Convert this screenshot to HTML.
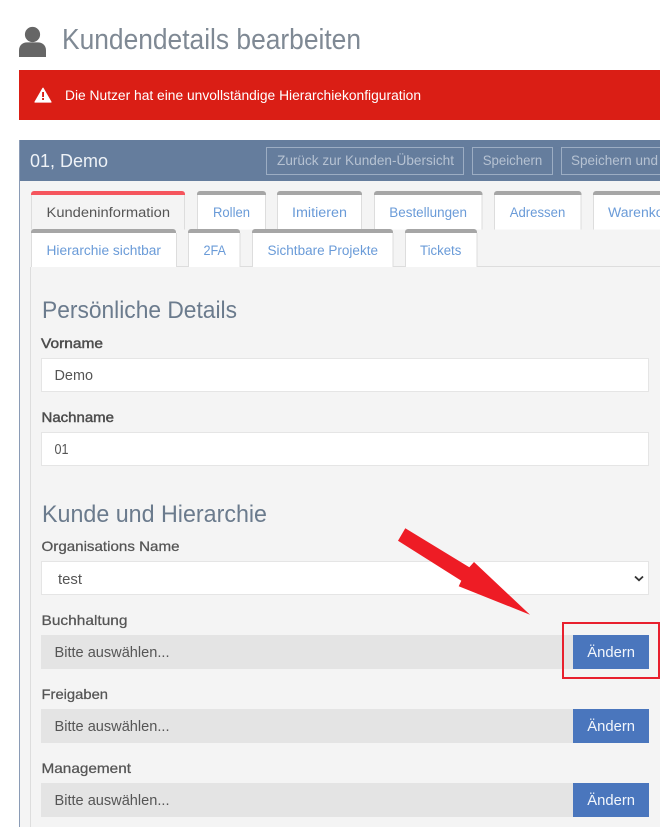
<!DOCTYPE html>
<html lang="de"><head><meta charset="utf-8"><title>Kundendetails bearbeiten</title>
<style>
html,body{margin:0;padding:0;background:#fff;width:660px;height:827px;overflow:hidden}
svg{display:block}
text{font-family:"Liberation Sans",sans-serif;white-space:pre}
.l{font-size:14px;fill:#555;stroke:#555;stroke-width:.25}
.b{font-size:14px;fill:#4d4d4d;stroke:#4d4d4d;stroke-width:.45}
.v{font-size:14.500px;fill:#555}
.t{font-size:13.500px;fill:#6a9bd8}
.h{font-size:24px;fill:#6b7b8d}
.hb{font-size:14px;fill:#b6c2d2}
.w{font-size:14.500px;fill:#f2f6fc}
</style></head><body>
<svg xmlns="http://www.w3.org/2000/svg" width="660" height="827" viewBox="0 0 660 827">
<rect width="660" height="827" fill="#fff"/>
<!-- title -->
<circle cx="32.5" cy="34.5" r="7.6" fill="#666"/>
<path d="M19 57V50.5C19 45 23 42.4 27 42.4H38C42 42.4 46 45 46 50.5V57Z" fill="#666"/>
<text x="62" y="49" font-size="29" fill="#7f8994" textLength="299" lengthAdjust="spacingAndGlyphs">Kundendetails bearbeiten</text>
<!-- alert -->
<rect x="19" y="70" width="641" height="50" fill="#da1e15"/>
<path d="M43 88.2 51 102H35Z" fill="#fff" stroke="#fff" stroke-width="1.2" stroke-linejoin="round"/>
<rect x="42.1" y="92" width="1.9" height="5" fill="#da1e15"/><rect x="42.1" y="98" width="1.9" height="2" fill="#da1e15"/>
<text x="65" y="100" font-size="13.500" fill="#fff" textLength="356" lengthAdjust="spacingAndGlyphs">Die Nutzer hat eine unvollständige Hierarchiekonfiguration</text>
<!-- panel -->
<rect x="19" y="140" width="1" height="687" fill="#8a9bb5"/>
<rect x="20" y="181" width="640" height="646" fill="#f4f4f4"/>
<rect x="20" y="140" width="640" height="41" fill="#657d9d"/>
<text x="30" y="167" font-size="18.500" fill="#eef2f7" textLength="78" lengthAdjust="spacingAndGlyphs">01, Demo</text>
<g fill="none" stroke="#9cadc3">
<rect x="266.5" y="147.5" width="197" height="27"/>
<rect x="472.5" y="147.5" width="80" height="27"/>
<rect x="561.5" y="147.5" width="130" height="27"/>
</g>
<text class="hb" x="277" y="165" textLength="177" lengthAdjust="spacingAndGlyphs">Zurück zur Kunden-Übersicht</text>
<text class="hb" x="482.7" y="165" textLength="59.6" lengthAdjust="spacingAndGlyphs">Speichern</text>
<text class="hb" x="571" y="165" textLength="87" lengthAdjust="spacingAndGlyphs">Speichern und</text>
<!-- tab row 1 -->
<rect x="31" y="191" width="154" height="10" rx="3" fill="#f5555d"/>
<rect x="31" y="195" width="154" height="35" fill="#ddd"/><rect x="32" y="195" width="152" height="35" fill="#f4f4f4"/>
<rect x="197" y="191" width="69" height="10" rx="3" fill="#a6a6a6"/>
<rect x="197" y="195" width="69" height="35" fill="#ddd"/><rect x="198" y="195" width="67" height="35" fill="#fff"/>
<rect x="277" y="191" width="85" height="10" rx="3" fill="#a6a6a6"/>
<rect x="277" y="195" width="85" height="35" fill="#ddd"/><rect x="278" y="195" width="83" height="35" fill="#fff"/>
<rect x="374" y="191" width="108.500" height="10" rx="3" fill="#a6a6a6"/>
<rect x="374" y="195" width="108.500" height="35" fill="#ddd"/><rect x="375" y="195" width="106.500" height="35" fill="#fff"/>
<rect x="494" y="191" width="87.500" height="10" rx="3" fill="#a6a6a6"/>
<rect x="494" y="195" width="87.500" height="35" fill="#ddd"/><rect x="495" y="195" width="85.500" height="35" fill="#fff"/>
<rect x="593" y="191" width="90" height="10" rx="3" fill="#a6a6a6"/>
<rect x="593" y="195" width="90" height="35" fill="#ddd"/><rect x="594" y="195" width="88" height="35" fill="#fff"/>
<text x="46.500" y="217" font-size="13.500" fill="#555" textLength="123.500" lengthAdjust="spacingAndGlyphs">Kundeninformation</text>
<text class="t" x="213" y="217" textLength="37" lengthAdjust="spacingAndGlyphs">Rollen</text>
<text class="t" x="292" y="217" textLength="55" lengthAdjust="spacingAndGlyphs">Imitieren</text>
<text class="t" x="389.300" y="217" textLength="77.700" lengthAdjust="spacingAndGlyphs">Bestellungen</text>
<text class="t" x="509.700" y="217" textLength="55.600" lengthAdjust="spacingAndGlyphs">Adressen</text>
<text class="t" x="608" y="217" textLength="68" lengthAdjust="spacingAndGlyphs">Warenkorb</text>
<!-- tab row 2 -->
<rect x="31" y="229.500" width="629" height="37" fill="#f4f4f4"/>
<rect x="31" y="266" width="629" height="1" fill="#ddd"/>
<rect x="31" y="229" width="145" height="10" rx="3" fill="#a6a6a6"/>
<rect x="31" y="233" width="145" height="34" fill="#ddd"/><rect x="32" y="233" width="144" height="34" fill="#fff"/>
<rect x="176" y="233" width="1" height="34" fill="#ddd"/>
<rect x="188" y="229" width="52" height="10" rx="3" fill="#a6a6a6"/>
<rect x="188" y="233" width="52.500" height="34" fill="#ddd"/><rect x="189" y="233" width="50.500" height="34" fill="#fff"/>
<rect x="252" y="229" width="141" height="10" rx="3" fill="#a6a6a6"/>
<rect x="252" y="233" width="141.500" height="34" fill="#ddd"/><rect x="253" y="233" width="139.500" height="34" fill="#fff"/>
<rect x="405" y="229" width="72" height="10" rx="3" fill="#a6a6a6"/>
<rect x="405" y="233" width="72.500" height="34" fill="#ddd"/><rect x="406" y="233" width="70.500" height="34" fill="#fff"/>
<text class="t" x="46.500" y="255" textLength="114.500" lengthAdjust="spacingAndGlyphs">Hierarchie sichtbar</text>
<text class="t" x="203.500" y="255" textLength="22.500" lengthAdjust="spacingAndGlyphs">2FA</text>
<text class="t" x="267.500" y="255" textLength="110.500" lengthAdjust="spacingAndGlyphs">Sichtbare Projekte</text>
<text class="t" x="420" y="255" textLength="41.300" lengthAdjust="spacingAndGlyphs">Tickets</text>
<rect x="30" y="267" width="1" height="560" fill="#ddd"/>
<!-- Persönliche Details -->
<text class="h" x="42" y="318" textLength="195" lengthAdjust="spacingAndGlyphs">Persönliche Details</text>
<text class="b" x="41" y="348" textLength="62" lengthAdjust="spacingAndGlyphs">Vorname</text>
<rect x="41.500" y="358.500" width="607" height="33" fill="#fff" stroke="#e5e5e5"/>
<text class="v" x="54.500" y="380" textLength="38.500" lengthAdjust="spacingAndGlyphs">Demo</text>
<text class="b" x="41.500" y="422" textLength="72.500" lengthAdjust="spacingAndGlyphs">Nachname</text>
<rect x="41.500" y="432.500" width="607" height="33" fill="#fff" stroke="#e5e5e5"/>
<text class="v" x="54.500" y="454" textLength="14" lengthAdjust="spacingAndGlyphs">01</text>
<!-- Kunde und Hierarchie -->
<text class="h" x="42" y="522" textLength="225" lengthAdjust="spacingAndGlyphs">Kunde und Hierarchie</text>
<text class="l" x="41.500" y="551" textLength="138" lengthAdjust="spacingAndGlyphs">Organisations Name</text>
<rect x="41.500" y="561.500" width="607" height="33" fill="#fff" stroke="#e5e5e5"/>
<text class="v" x="58" y="584" textLength="24" lengthAdjust="spacingAndGlyphs">test</text>
<path d="M635 576.500 639 580.300 643 576.500" fill="none" stroke="#333" stroke-width="1.800"/>
<text class="l" x="41.500" y="625" textLength="86" lengthAdjust="spacingAndGlyphs">Buchhaltung</text>
<rect x="41" y="635" width="532" height="34" fill="#e4e4e4"/>
<text class="v" x="54.500" y="657" textLength="115" lengthAdjust="spacingAndGlyphs">Bitte auswählen...</text>
<rect x="573" y="635" width="76" height="34" fill="#4a76bd"/>
<text class="w" x="587.300" y="657" textLength="47.700" lengthAdjust="spacingAndGlyphs">Ändern</text>
<text class="l" x="41.500" y="699" textLength="66.500" lengthAdjust="spacingAndGlyphs">Freigaben</text>
<rect x="41" y="709" width="532" height="34" fill="#e4e4e4"/>
<text class="v" x="54.500" y="731" textLength="115" lengthAdjust="spacingAndGlyphs">Bitte auswählen...</text>
<rect x="573" y="709" width="76" height="34" fill="#4a76bd"/>
<text class="w" x="587.300" y="731" textLength="47.700" lengthAdjust="spacingAndGlyphs">Ändern</text>
<text class="l" x="41.500" y="773" textLength="89.500" lengthAdjust="spacingAndGlyphs">Management</text>
<rect x="41" y="783" width="532" height="34" fill="#e4e4e4"/>
<text class="v" x="54.500" y="805" textLength="115" lengthAdjust="spacingAndGlyphs">Bitte auswählen...</text>
<rect x="573" y="783" width="76" height="34" fill="#4a76bd"/>
<text class="w" x="587.300" y="805" textLength="47.700" lengthAdjust="spacingAndGlyphs">Ändern</text>
<!-- annotation -->
<rect x="563" y="623" width="96" height="55" fill="none" stroke="#e8202e" stroke-width="2"/>
<path d="M405.300 528.300 469.300 567.300 474 562 530 614.700 458.700 586.300 461.300 580.700 398 540.700Z" fill="#ee1c25"/>
</svg>
</body></html>
